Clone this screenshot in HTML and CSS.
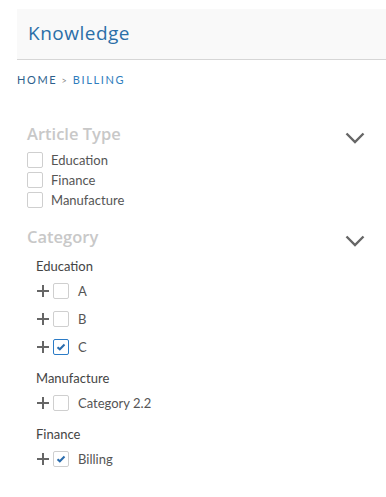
FILE: index.html
```html
<!DOCTYPE html>
<html lang="en">
  <head>
    <meta charset="UTF-8" />
    <meta name="viewport" content="width=device-width, initial-scale=1.0" />
    <title>Knowledge</title>
    <link rel="stylesheet" href="styles.css">
  </head>
  <body>
    <div class="page">
      <header class="kb-header">
        <h1>Knowledge</h1>
      </header>

      <nav class="crumbs">
        <a href="#" class="crumb-home">HOME</a>
        <span class="crumb-sep">&gt;</span>
        <a href="#" class="crumb-current">BILLING</a>
      </nav>

      <aside class="filters">
        <section class="filter">
          <div class="filter-head">
            <h2>Article Type</h2>
            <svg class="chevron" width="20" height="12" viewBox="0 0 20 12">
              <path d="M1.5 1.5 L10 10 L18.5 1.5" />
            </svg>
          </div>
          <ul class="checklist">
            <li><label class="check-row"><span class="box"></span><span>Education</span></label></li>
            <li><label class="check-row"><span class="box"></span><span>Finance</span></label></li>
            <li><label class="check-row"><span class="box"></span><span>Manufacture</span></label></li>
          </ul>
        </section>

        <section class="filter">
          <div class="filter-head">
            <h2>Category</h2>
            <svg class="chevron" width="20" height="12" viewBox="0 0 20 12">
              <path d="M1.5 1.5 L10 10 L18.5 1.5" />
            </svg>
          </div>

          <div class="cat-group">
            <p class="cat-title">Education</p>
            <div class="cat-row">
              <svg class="plus" width="12" height="12" viewBox="0 0 12 12"><path d="M0 6 H12 M6 0 V12" /></svg>
              <span class="box"></span>
              <span class="cat-label">A</span>
            </div>
            <div class="cat-row">
              <svg class="plus" width="12" height="12" viewBox="0 0 12 12"><path d="M0 6 H12 M6 0 V12" /></svg>
              <span class="box"></span>
              <span class="cat-label">B</span>
            </div>
            <div class="cat-row">
              <svg class="plus" width="12" height="12" viewBox="0 0 12 12"><path d="M0 6 H12 M6 0 V12" /></svg>
              <span class="box checked focused">
                <svg width="10" height="8" viewBox="0 0 10 8"><path d="M1.5 4.2 L3.8 6.3 L8.5 1.5" /></svg>
              </span>
              <span class="cat-label">C</span>
            </div>
          </div>

          <div class="cat-group">
            <p class="cat-title">Manufacture</p>
            <div class="cat-row">
              <svg class="plus" width="12" height="12" viewBox="0 0 12 12"><path d="M0 6 H12 M6 0 V12" /></svg>
              <span class="box"></span>
              <span class="cat-label">Category 2.2</span>
            </div>
          </div>

          <div class="cat-group">
            <p class="cat-title">Finance</p>
            <div class="cat-row">
              <svg class="plus" width="12" height="12" viewBox="0 0 12 12"><path d="M0 6 H12 M6 0 V12" /></svg>
              <span class="box checked">
                <svg width="10" height="8" viewBox="0 0 10 8"><path d="M1.5 4.2 L3.8 6.3 L8.5 1.5" /></svg>
              </span>
              <span class="cat-label">Billing</span>
            </div>
          </div>
        </section>
      </aside>
    </div>
  </body>
</html>
```

FILE: styles.css
```css
body {
  margin: 0;
  font-family: Lato, "Liberation Sans", sans-serif;
  font-size: 13px;
  color: #555;
  background: #fff;
}

.page {
  padding-left: 17px;
}

/* top bar */
.kb-header {
  margin-top: 9px;
  height: 50px;
  background: #f9f9f9;
  border-bottom: 1px solid #d6d6d6;
  padding-left: 11px;
}

.kb-header h1 {
  margin: 0;
  font-family: "Open Sans", sans-serif;
  font-weight: 500;
  font-size: 19px;
  line-height: 48px;
  letter-spacing: 0.5px;
  color: #2b6fa8;
}

.crumbs {
  margin-top: 12px;
  font-size: 11px;
  line-height: 16px;
  letter-spacing: 1.6px;
}

.crumbs a {
  text-decoration: none;
}

.crumb-home {
  color: #2d5f8c;
}

.crumb-sep {
  color: #888;
  font-size: 9px;
}

.crumb-current {
  color: #2f7dbd;
}

/* filters */
.filters {
  margin-top: 33px;
  padding-left: 10px;
}

.filter + .filter {
  margin-top: 15px;
}

.filter-head {
  display: flex;
  justify-content: space-between;
  align-items: flex-start;
  padding-right: 21px;
}

.filter-head h2 {
  margin: 0;
  font-family: "Open Sans", sans-serif;
  font-weight: 600;
  font-size: 16.5px;
  line-height: 24px;
  color: #c8c8c8;
}

.chevron {
  margin-top: 10px;
}

.chevron path {
  fill: none;
  stroke: #666;
  stroke-width: 2.4;
}

.checklist {
  list-style: none;
  margin: 4px 0 0;
  padding: 0;
}

.check-row {
  display: flex;
  align-items: center;
  gap: 8px;
  height: 20px;
}

.box {
  box-sizing: border-box;
  width: 16px;
  height: 16px;
  border: 1px solid #cfcfcf;
  border-radius: 2px;
  background: #fff;
  display: flex;
  align-items: center;
  justify-content: center;
}

.box svg path {
  fill: none;
  stroke: #2a6cad;
  stroke-width: 2;
}

.box.focused {
  border: 1.5px solid #2b7bc6;
}

/* category tree */
.cat-group {
  margin-top: 7px;
  padding-left: 9px;
}

.cat-title {
  margin: 0;
  line-height: 21px;
  color: #444;
}

.cat-row {
  display: flex;
  align-items: center;
  height: 28px;
}

.plus {
  margin-left: 1px;
  margin-right: 4px;
}

.plus path {
  stroke: #666;
  stroke-width: 2;
}

.cat-label {
  margin-left: 9px;
}
```
